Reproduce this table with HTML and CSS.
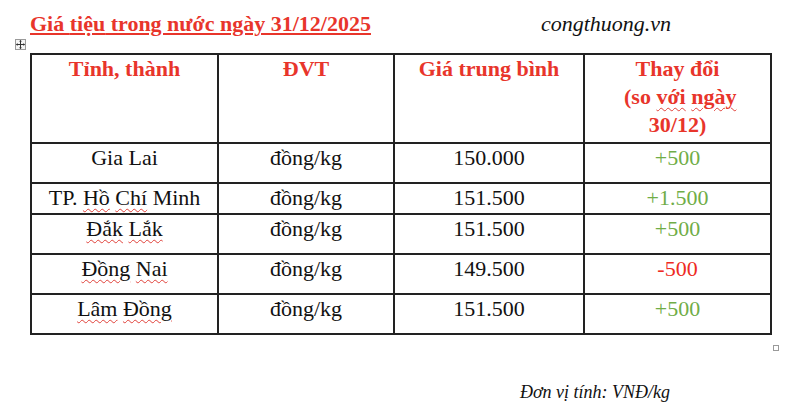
FILE: index.html
```html
<!DOCTYPE html>
<html lang="vi">
<head>
<meta charset="utf-8">
<title>Giá tiệu trong nước ngày 31/12/2025</title>
<link rel="stylesheet" href="styles.css">
</head>
<body>
<header class="top">
  <h1 class="title">Giá <span class="gram">tiệu</span> trong nước ngày 31/12/2025</h1>
  <span class="site">congthuong.vn</span>
</header>
<div class="table-wrap">
  <span class="move-handle">
    <svg width="9" height="9" viewBox="0 0 9 9" aria-hidden="true">
      <path d="M4.5 0.5v8M0.5 4.5h8" stroke="#333" stroke-width="1" fill="none"/>
      <path d="M4.5 0L3 1.6h3zM4.5 9L3 7.4h3zM0 4.5L1.6 3v3zM9 4.5L7.4 3v3z" fill="#333"/>
    </svg>
  </span>
  <table class="price-table">
    <colgroup>
      <col class="c1"><col class="c2"><col class="c3"><col class="c4">
    </colgroup>
    <thead>
      <tr class="head-row">
        <th>Tỉnh, thành</th>
        <th>ĐVT</th>
        <th>Giá trung bình</th>
        <th>Thay đổi<br>&nbsp;(so <span class="sq">với</span> <span class="sq">ngày</span><br>30/12)</th>
      </tr>
    </thead>
    <tbody>
      <tr class="row">
        <td>Gia Lai</td><td>đồng/kg</td><td>150.000</td><td class="up">+500</td>
      </tr>
      <tr class="row row-short">
        <td>TP. <span class="sq">Hồ</span> <span class="sq">Chí</span> Minh</td><td>đồng/kg</td><td>151.500</td><td class="up">+1.500</td>
      </tr>
      <tr class="row">
        <td><span class="sq">Đắk</span> <span class="sq">Lắk</span></td><td>đồng/kg</td><td>151.500</td><td class="up">+500</td>
      </tr>
      <tr class="row">
        <td><span class="sq">Đồng</span> <span class="sq">Nai</span></td><td>đồng/kg</td><td>149.500</td><td class="down">-500</td>
      </tr>
      <tr class="row">
        <td><span class="sq">Lâm</span> <span class="sq">Đồng</span></td><td>đồng/kg</td><td>151.500</td><td class="up">+500</td>
      </tr>
    </tbody>
  </table>
  <span class="resize-handle"></span>
</div>
<p class="unit">Đơn vị tính: VNĐ/kg</p>
</body>
</html>
```
FILE: styles.css
```css
html, body {
  margin: 0;
  padding: 0;
  background: #ffffff;
}
body {
  font-family: "Liberation Serif", "Times New Roman", serif;
  color: #111;
  width: 800px;
  height: 407px;
  overflow: hidden;
}
.top {
  display: flex;
  align-items: flex-start;
  padding-left: 30px;
}
.title {
  margin: 0;
  padding-top: 11px;
  font-size: 22px;
  line-height: 26px;
  font-weight: bold;
  color: #e8352b;
  text-decoration: underline;
  text-decoration-thickness: 2px;
  text-underline-offset: 2px;
  white-space: nowrap;
}
.site {
  margin-left: 170px;
  padding-top: 11px;
  font-size: 22px;
  line-height: 26px;
  font-style: italic;
  color: #111;
}
.table-wrap {
  position: relative;
  margin-left: 30px;
  margin-top: 16px;
  width: 741px;
}
.move-handle {
  position: absolute;
  left: -15px;
  top: -14px;
  width: 11px;
  height: 11px;
  border: 1px solid #9a9a9a;
  background: #f4f4f4;
  display: flex;
  align-items: center;
  justify-content: center;
  box-sizing: border-box;
}
.resize-handle {
  position: absolute;
  right: -8px;
  bottom: -16px;
  width: 6px;
  height: 6px;
  border: 1px solid #9a9a9a;
  background: #fff;
  box-sizing: border-box;
}
.price-table {
  border-collapse: collapse;
  table-layout: fixed;
  width: 741px;
  font-size: 22px;
}
.c1 { width: 187px; }
.c2 { width: 176px; }
.c3 { width: 190px; }
.c4 { width: 187px; }
.price-table th,
.price-table td {
  border: 2px solid #222;
  text-align: center;
  vertical-align: top;
  padding: 0;
}
.price-table th {
  height: 87px;
  line-height: 28px;
  font-weight: bold;
  color: #e8352b;
  padding-top: 0;
}
.price-table td {
  height: 36px;
  line-height: 24px;
  padding-top: 2px;
  box-sizing: border-box;
  color: #111;
}
.row td { height: 40px; }
.row-short td { height: 31px; }
.up { color: #70ad47 !important; }
.down { color: #ee2a22 !important; }
.sq {
  text-decoration: underline wavy #e0413a;
  text-decoration-thickness: 1px;
  text-underline-offset: 3px;
}
.unit {
  margin: 46px 0 0 520px;
  font-size: 18px;
  line-height: 22px;
  font-style: italic;
  color: #111;
}
```
